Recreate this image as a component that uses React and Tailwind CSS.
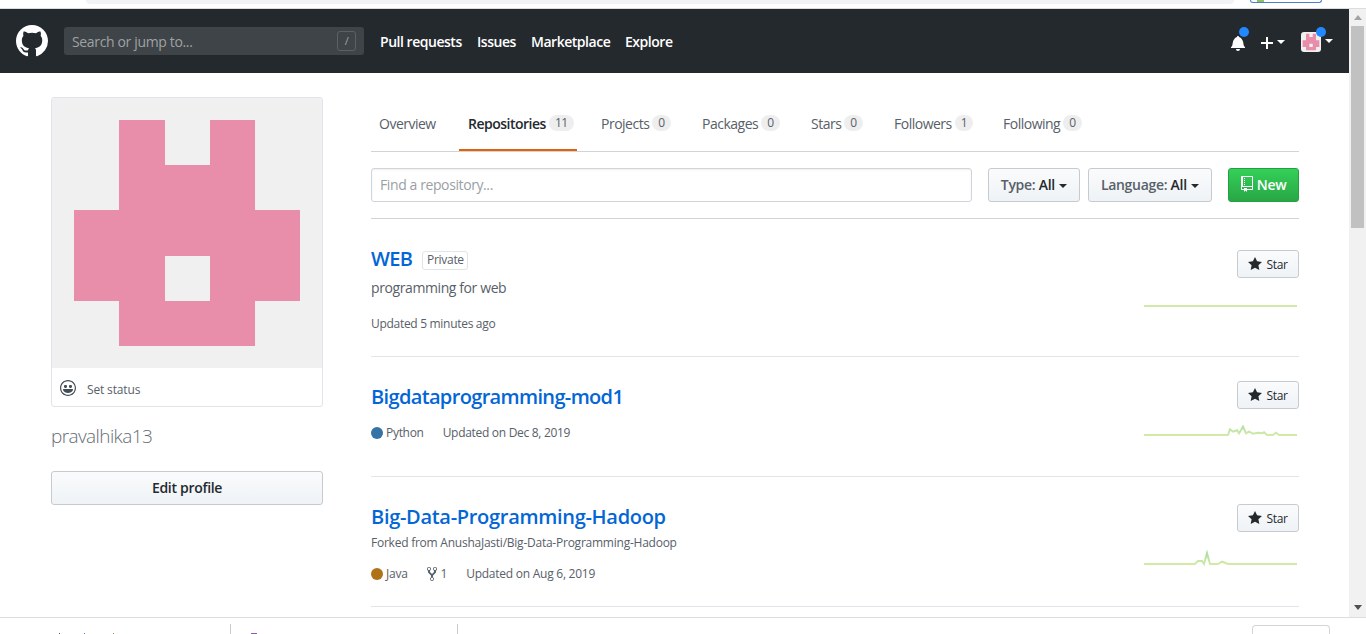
import React from 'react';

const tabs = [
    { label: 'Overview', width: 'w-[72px]' },
    { label: 'Repositories', count: 11, active: true, width: 'w-[118px]' },
    { label: 'Projects', count: 0, width: 'w-[85px]' },
    { label: 'Packages', count: 0, width: 'w-[93px]' },
    { label: 'Stars', count: 0, width: 'w-[67px]' },
    { label: 'Followers', count: 1, width: 'w-[93px]' },
    { label: 'Following', count: 0, width: 'w-[96px]' },
];

const flatLine = '0,28 153,28';
const pythonLine = '0,28 84,28 86,22.3 89,24.7 93,23.3 95,26.3 99,19.7 102,26.3 105,24.7 109,26.7 114,25.7 118,26.3 120,25.3 123,28 129,28 132,25.7 135,28 153,28';
const javaLine = '0,28 51,28 54,25 58,25 60,28 63,17.3 66,28 74,28 78,25.7 84,28 153,28';

const Star = ({ className }) => (
    <svg viewBox="0 0 14 16" className={className} fill="currentColor">
        <path d="M14 6l-4.9-.64L7 1 4.9 5.36 0 6l3.6 3.26L2.67 14 7 11.67 11.33 14l-.93-4.74L14 6z" />
    </svg>
);

const Caret = ({ className }) => (
    <span className={`inline-block w-0 h-0 border-x-4 border-x-transparent border-t-4 ${className}`} />
);

const Identicon = ({ className }) => (
    <svg viewBox="0 0 270 270" className={className}>
        <rect width="270" height="270" fill="#f0f0f0" />
        <path fill="#e88eab" fillRule="evenodd" d="M67 22h46v45h45V22h45v90h45v91h-45v45H67v-45H22v-91h45zM113 158v45h45v-45z" />
    </svg>
);

const Sparkline = ({ points, className }) => (
    <svg width="155" height="30" className={className}>
        <defs>
            <linearGradient id="spark" gradientUnits="userSpaceOnUse" x1="0" y1="30" x2="0" y2="14">
                <stop offset="0" stopColor="#d9ecA8" />
                <stop offset="1" stopColor="#9fdb9f" />
            </linearGradient>
        </defs>
        <polyline points={points} fill="none" stroke="url(#spark)" strokeWidth="2" />
    </svg>
);

const StarButton = () => (
    <button className="w-[62px] h-[28px] flex items-center justify-center gap-[4px] rounded-[3px] border border-[#c6cbd1] bg-gradient-to-b from-[#fafbfc] to-[#eff3f6] text-[12px] text-[#24292e]">
        <Star className="w-[14px] h-[16px]" />
        <span className="pt-[2px]">Star</span>
    </button>
);

const Tab = ({ tab }) => (
    <a className={`${tab.width} mr-4 shrink-0 h-[54px] flex items-center text-[14px] tracking-[-0.5px] ${tab.active ? 'pl-[9px] border-b-2 border-[#e36209] text-[#24292e] font-semibold' : 'pl-2 pb-[2px] text-[#586069]'}`}>
        {tab.label}
        {tab.count !== undefined && (
            <span className="ml-[3px] px-[6px] h-[16px] leading-[16px] rounded-full bg-[#eeeeee] text-[12px] font-normal text-[#586069]">{tab.count}</span>
        )}
    </a>
);

export default function App() {
    return (
        <div className="w-[1366px] h-[634px] overflow-hidden flex flex-col bg-white font-['Open_Sans',sans-serif] tracking-[-0.3px]">
            {/* Borde del navegador */}
            <div className="h-[9px] shrink-0 flex items-start border-b border-[#dddddd]">
                <div className="ml-[86px] w-[1148px] h-[4px] rounded-b-[8px] bg-[#f1f3f4]" />
                <div className="ml-[16px] w-[72px] h-[3px] rounded-b-[8px] border-x border-b border-[#4a80d0] pl-[6px]">
                    <span className="block w-[7px] h-[2px] bg-[#8fbf6a]" />
                </div>
            </div>

            <div className="flex flex-1 min-h-0">
                <div className="flex-1 min-w-0 overflow-hidden">
                    {/* Header */}
                    <header className="h-[64px] bg-[#24292e] flex items-center pl-4 text-white">
                        <svg viewBox="0 0 16 16" className="w-8 h-8 shrink-0" fill="currentColor">
                            <path d="M8 0C3.58 0 0 3.58 0 8c0 3.54 2.29 6.53 5.47 7.59.4.07.55-.17.55-.38 0-.19-.01-.82-.01-1.49-2.01.37-2.53-.49-2.69-.94-.09-.23-.48-.94-.82-1.13-.28-.15-.68-.52-.01-.53.63-.01 1.08.58 1.23.82.72 1.21 1.87.87 2.33.66.07-.52.28-.87.51-1.07-1.78-.2-3.64-.89-3.64-3.95 0-.87.31-1.59.82-2.15-.08-.2-.36-1.02.08-2.12 0 0 .67-.21 2.2.82.64-.18 1.32-.27 2-.27.68 0 1.36.09 2 .27 1.53-1.04 2.2-.82 2.2-.82.44 1.1.16 1.92.08 2.12.51.56.82 1.27.82 2.15 0 3.07-1.87 3.75-3.65 3.95.29.25.54.73.54 1.48 0 1.07-.01 1.93-.01 2.2 0 .21.15.46.55.38A8.013 8.013 0 0 0 16 8c0-4.42-3.58-8-8-8z" />
                        </svg>
                        <div className="ml-4 w-[300px] h-[28px] rounded-[3px] bg-[#3f4448] flex items-center justify-between pl-2 pr-2 text-[14px] text-[#9ea2a5] tracking-[-0.35px]">
                            Search or jump to...
                            <span className="w-[19px] h-[20px] rounded-[3px] border border-[#5c6165] flex items-center justify-center text-[11px]">/</span>
                        </div>
                        <nav className="ml-4 flex items-center text-[14px] font-semibold tracking-[-0.47px]">
                            <a className="w-[97px]">Pull requests</a>
                            <a className="w-[54px]">Issues</a>
                            <a className="w-[94px]">Marketplace</a>
                            <a>Explore</a>
                        </nav>
                        <div className="ml-auto flex items-center pr-4">
                            <div className="relative">
                                <svg viewBox="0 0 14 16" className="w-[14px] h-4 mt-[4px]" fill="currentColor">
                                    <path d="M14 12v1H0v-1l.73-.58c.77-.77.81-2.55 1.19-4.42C2.69 3.23 6 2 6 2c0-.55.45-1 1-1s1 .45 1 1c0 0 3.39 1.23 4.16 5 .38 1.88.42 3.66 1.19 4.42l.66.58H14zm-7 4c1.11 0 2-.89 2-2H5c0 1.11.89 2 2 2z" />
                                </svg>
                                <span className="absolute -top-[4px] left-[8px] w-[10px] h-[10px] rounded-full bg-[#2188ff]" />
                            </div>
                            <svg viewBox="0 0 12 16" className="ml-[16px] mt-[4px] w-[12px] h-4" fill="currentColor">
                                <path d="M12 9H7v5H5V9H0V7h5V2h2v5h5v2z" />
                            </svg>
                            <Caret className="ml-[4px] mt-[2px] border-t-white" />
                            <div className="relative ml-[16px] mt-[2px]">
                                <Identicon className="w-5 h-5 rounded-[3px]" />
                                <span className="absolute -top-[5px] left-[15px] w-[10px] h-[10px] rounded-full bg-[#2188ff]" />
                            </div>
                            <Caret className="ml-[4px] border-t-white" />
                        </div>
                    </header>

                    <main className="flex pl-[51px] pr-[50px] pt-6">
                        {/* Sidebar */}
                        <aside className="w-[272px] shrink-0">
                            <div className="border border-[#e1e4e8] rounded-[3px] overflow-hidden">
                                <Identicon className="block w-[270px] h-[270px]" />
                                <div className="h-[38px] flex items-start pl-2 pt-[12px] text-[12px] leading-[16px] text-[#586069] tracking-[-0.15px]">
                                    <svg viewBox="0 0 16 16" className="w-4 h-4" fill="#444d56">
                                        <path d="M8 0C3.58 0 0 3.58 0 8s3.58 8 8 8 8-3.58 8-8-3.58-8-8-8zm4.81 12.81a6.72 6.72 0 0 1-2.17 1.45c-.83.36-1.72.53-2.64.53-.92 0-1.81-.17-2.64-.53-.81-.34-1.55-.83-2.17-1.45a6.773 6.773 0 0 1-1.45-2.17A6.59 6.59 0 0 1 1.21 8c0-.92.17-1.81.53-2.64.34-.81.83-1.55 1.45-2.17.62-.62 1.36-1.11 2.17-1.45A6.59 6.59 0 0 1 8 1.21c.92 0 1.81.17 2.64.53.81.34 1.55.83 2.17 1.45.62.62 1.11 1.36 1.45 2.17.36.83.53 1.72.53 2.64 0 .92-.17 1.81-.53 2.64-.34.81-.83 1.55-1.45 2.17zM4 6.8v-.59c0-.66.53-1.19 1.2-1.19h.59c.66 0 1.19.53 1.19 1.19v.59c0 .67-.53 1.2-1.19 1.2H5.2C4.53 8 4 7.47 4 6.8zm5 0v-.59c0-.66.53-1.19 1.2-1.19h.59c.66 0 1.19.53 1.19 1.19v.59c0 .67-.53 1.2-1.19 1.2h-.59C9.53 8 9 7.47 9 6.8zm4 3.2c-.72 1.88-2.91 3-5 3s-4.28-1.13-5-3c-.14-.39.23-1 .66-1h8.59c.41 0 .89.61.75 1z" />
                                    </svg>
                                    <span className="ml-[11px] mt-[2px]">Set status</span>
                                </div>
                            </div>
                            <div className="mt-[15px] h-[28px] leading-[28px] text-[19px] font-light text-[#666e76] tracking-[-0.6px]">pravalhika13</div>
                            <button className="mt-[21px] w-full h-[34px] pb-[2px] rounded-[3px] border border-[#c6cbd1] bg-gradient-to-b from-[#fafbfc] to-[#eff3f6] text-[14px] font-semibold text-[#24292e]">Edit profile</button>
                        </aside>

                        {/* Contenido */}
                        <section className="ml-[48px] flex-1 min-w-0">
                            <div className="flex border-b border-[#d1d5da] h-[55px]">
                                {tabs.map((tab) => <Tab key={tab.label} tab={tab} />)}
                            </div>

                            <div className="flex items-start h-[67px] pt-4 border-b border-[#d1d5da]">
                                <div className="w-[601px] h-[34px] pb-[2px] rounded-[3px] border border-[#d1d5da] flex items-center pl-2 text-[14px] text-[#9a9fa5] tracking-[-0.4px] shadow-[inset_0_1px_2px_rgba(27,31,35,0.075)]">Find a repository...</div>
                                <button className="ml-4 w-[92px] h-[34px] pb-[2px] rounded-[3px] border border-[#c6cbd1] bg-gradient-to-b from-[#fafbfc] to-[#eff3f6] text-[14px] font-semibold text-[#586069]">
                                    Type: <span className="text-[#24292e]">All</span> <Caret className="ml-[1px] align-middle border-t-[#24292e]" />
                                </button>
                                <button className="ml-2 w-[124px] h-[34px] pb-[2px] rounded-[3px] border border-[#c6cbd1] bg-gradient-to-b from-[#fafbfc] to-[#eff3f6] text-[14px] font-semibold text-[#586069]">
                                    Language: <span className="text-[#24292e]">All</span> <Caret className="ml-[1px] align-middle border-t-[#24292e]" />
                                </button>
                                <button className="ml-4 w-[71px] h-[34px] pb-[2px] rounded-[3px] border border-[#23a042] bg-gradient-to-b from-[#34d058] to-[#28a745] text-[14px] font-semibold text-white flex items-center justify-center gap-[4px]">
                                    <svg viewBox="0 0 12 16" className="w-3 h-4 -mt-[1px]" fill="currentColor">
                                        <path d="M4 9H3V8h1v1zm0-3H3v1h1V6zm0-2H3v1h1V4zm0-2H3v1h1V2zm8-1v12c0 .55-.45 1-1 1H6v2l-1.5-1.5L3 16v-2H1c-.55 0-1-.45-1-1V1c0-.55.45-1 1-1h10c.55 0 1 .45 1 1zm-1 10H1v2h2v-1h3v1h5v-2zm0-10H2v9h9V1z" />
                                    </svg>
                                    New
                                </button>
                            </div>

                            {/* WEB */}
                            <div className="h-[138px] flex justify-between border-b border-[#e1e4e8] pt-[31px]">
                                <div>
                                    <div className="flex items-center h-[20px]">
                                        <a className="mb-[2px] text-[20px] font-semibold text-[#0366d6] tracking-[-0.6px]">WEB</a>
                                        <span className="ml-[10px] h-[19px] w-[46px] flex items-center justify-center rounded-[3px] border border-[#e1e4e8] text-[12px] text-[#586069]">Private</span>
                                    </div>
                                    <p className="mt-[8px] text-[14px] leading-[20px] text-[#586069] tracking-[-0.4px]">programming for web</p>
                                    <p className="mt-[18px] text-[12px] leading-[16px] text-[#586069]">Updated 5 minutes ago</p>
                                </div>
                                <div className="flex flex-col items-end">
                                    <StarButton />
                                    <Sparkline points={flatLine} />
                                </div>
                            </div>

                            {/* Bigdataprogramming-mod1 */}
                            <div className="h-[120px] flex justify-between border-b border-[#e1e4e8] pt-6">
                                <div>
                                    <a className="block h-[32px] leading-[32px] text-[20px] font-semibold text-[#0366d6] tracking-[-0.65px]">Bigdataprogramming-mod1</a>
                                    <div className="mt-[12px] flex items-center text-[12px] leading-[16px] text-[#586069]">
                                        <span className="w-3 h-3 rounded-full bg-[#3572a5]" />
                                        <span className="ml-[3px]">Python</span>
                                        <span className="ml-[19px]">Updated on Dec 8, 2019</span>
                                    </div>
                                </div>
                                <div className="flex flex-col items-end">
                                    <StarButton />
                                    <Sparkline points={pythonLine} className="-mt-[2px]" />
                                </div>
                            </div>

                            {/* Big-Data-Programming-Hadoop */}
                            <div className="h-[130px] flex justify-between border-b border-[#e1e4e8] pt-[27px]">
                                <div>
                                    <a className="block h-[26px] leading-[26px] text-[20px] font-semibold text-[#0366d6]">Big-Data-Programming-Hadoop</a>
                                    <p className="mt-[5px] text-[12px] leading-[16px] text-[#586069] tracking-[-0.24px]">Forked from AnushaJasti/Big-Data-Programming-Hadoop</p>
                                    <div className="mt-[15px] flex items-center text-[12px] leading-[16px] text-[#586069] tracking-[-0.25px]">
                                        <span className="w-3 h-3 rounded-full bg-[#b07219]" />
                                        <span className="ml-[3px]">Java</span>
                                        <svg viewBox="0 0 10 16" className="ml-[19px] w-[10px] h-4" fill="currentColor">
                                            <path d="M8 1a1.993 1.993 0 0 0-1 3.72V6L5 8 3 6V4.72A1.993 1.993 0 0 0 2 1a1.993 1.993 0 0 0-1 3.72V6.5l3 3v1.78A1.993 1.993 0 0 0 5 15a1.993 1.993 0 0 0 1-3.72V9.5l3-3V4.72A1.993 1.993 0 0 0 8 1zM2 4.2C1.34 4.2.8 3.65.8 3c0-.65.55-1.2 1.2-1.2.65 0 1.2.55 1.2 1.2 0 .65-.55 1.2-1.2 1.2zm3 10c-.66 0-1.2-.55-1.2-1.2 0-.65.55-1.2 1.2-1.2.65 0 1.2.55 1.2 1.2 0 .65-.55 1.2-1.2 1.2zm3-10c-.66 0-1.2-.55-1.2-1.2 0-.65.55-1.2 1.2-1.2.65 0 1.2.55 1.2 1.2 0 .65-.55 1.2-1.2 1.2z" />
                                        </svg>
                                        <span className="ml-[4px]">1</span>
                                        <span className="ml-[19px]">Updated on Aug 6, 2019</span>
                                    </div>
                                </div>
                                <div className="flex flex-col items-end">
                                    <StarButton />
                                    <Sparkline points={javaLine} className="mt-[4px]" />
                                </div>
                            </div>
                        </section>
                    </main>
                </div>

                {/* Scrollbar */}
                <div className="w-[17px] shrink-0 bg-[#f1f1f1] flex flex-col items-center pt-[6px]">
                    <span className="w-0 h-0 border-x-[4px] border-x-transparent border-b-[5px] border-b-[#a3a3a3]" />
                    <div className="mt-[6px] w-[13px] h-[202px] bg-[#c1c1c1]" />
                    <span className="mt-auto mb-[7px] w-0 h-0 border-x-[4px] border-x-transparent border-t-[5px] border-t-[#505050]" />
                </div>
            </div>

            {/* Barra de descargas */}
            <div className="h-[17px] shrink-0 border-t border-[#dddddd] flex pt-[6px]">
                <div className="w-[231px] border-r border-[#cccccc] h-[10px] flex items-end">
                    <span className="ml-[59px] w-px h-px bg-[#555555]" />
                    <span className="ml-[24px] w-px h-px bg-[#5577aa]" />
                    <span className="ml-[28px] w-px h-px bg-[#998855]" />
                </div>
                <div className="w-[227px] border-r border-[#cccccc] h-[10px] flex items-end">
                    <span className="ml-[20px] w-[6px] h-px bg-[#8a5ca8]" />
                </div>
                <div className="ml-auto mr-[36px] mt-[1px] w-[78px] h-[9px] rounded-t-[4px] border-x border-t border-[#d5d5d5]" />
            </div>
        </div>
    );
}
